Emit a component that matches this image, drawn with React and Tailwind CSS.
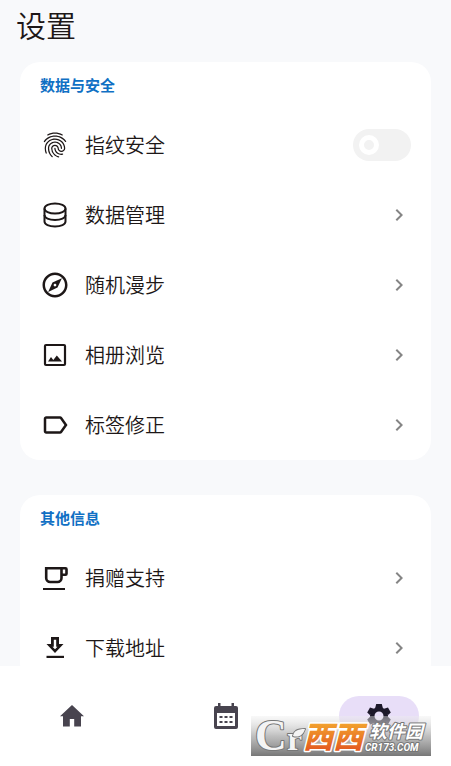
import React from 'react'
import {
  MdFingerprint,
  MdOutlineExplore,
  MdLabelOutline,
  MdChevronRight,
} from 'react-icons/md'

const DatabaseIcon = ({ className }) => (
  <svg viewBox="0 0 30 30" className={className} fill="none" stroke="currentColor" strokeWidth="2">
    <ellipse cx="15" cy="8.500" rx="10.500" ry="5" />
    <path d="M4.500 8.500v13c0 3 4.500 5 10.500 5s10.500-2 10.500-5v-13" />
    <path d="M4.500 15c0 3 4.500 5 10.500 5s10.500-2 10.500-5" />
  </svg>
)

const PhotoIcon = ({ className }) => (
  <svg viewBox="0 0 30 30" className={className}>
    <rect x="5" y="5" width="20" height="20" rx="1" fill="none" stroke="currentColor" strokeWidth="2.200" />
    <path fill="currentColor" d="M8 21.500l3-4.500 2.300 3 3.500-4.500 5.200 6z" />
  </svg>
)

const CupIcon = ({ className }) => (
  <svg viewBox="0 0 30 30" className={className} fill="none" stroke="currentColor" strokeWidth="2.600">
    <path d="M6.200 5.200h15.300V15a4 4 0 0 1-4 4h-7.300a4 4 0 0 1-4-4z" />
    <path d="M21.500 5.200h4a1 1 0 0 1 1 1v4.600a1 1 0 0 1-1 1h-4" />
    <path d="M3 26h22" strokeWidth="2" />
  </svg>
)

const DownloadIcon = ({ className }) => (
  <svg viewBox="0 0 30 30" className={className} fill="currentColor">
    <path fillRule="evenodd" d="M11 4h8v7h4.500L15 20l-8.500-9H11zM13.800 6.800v7h-1.300L15 16.300l2.500-2.500h-1.300v-7z" />
    <path d="M6.500 22.800h17.500v2.200H6.500z" />
  </svg>
)

const HomeIcon = ({ className }) => (
  <svg viewBox="0 0 24 22" className={className} fill="currentColor">
    <path d="M12 0l12 11.300h-3V21.500h-6.800V14H9.800v7.500H3V11.300H0z" />
  </svg>
)

const CalendarIcon = ({ className }) => (
  <svg viewBox="0 0 24 27" className={className}>
    <path fill="currentColor" fillRule="evenodd" d="M4 0h2.500v3h11V0H20v3h2a2 2 0 0 1 2 2v19a2 2 0 0 1-2 2H2a2 2 0 0 1-2-2V5a2 2 0 0 1 2-2h2zM3 10v13h18V10z" />
    <path fill="currentColor" d="M5.500 13h3v2h-3zM10.500 13h3v2h-3zM15.500 13h3v2h-3zM5.500 18h3v2h-3zM10.500 18h3v2h-3zM15.500 18h3v2h-3z" />
  </svg>
)

const GearIcon = ({ className }) => (
  <svg viewBox="-12 -12 24 24" className={className}>
    <circle r="6.800" fill="none" stroke="currentColor" strokeWidth="4.600" />
    <g fill="currentColor">
      <path id="tooth" d="M-2.800-12h5.600l1 4h-7.600z" />
      <use href="#tooth" transform="rotate(60)" />
      <use href="#tooth" transform="rotate(120)" />
      <use href="#tooth" transform="rotate(180)" />
      <use href="#tooth" transform="rotate(240)" />
      <use href="#tooth" transform="rotate(300)" />
    </g>
  </svg>
)

const dataItems = [
  { icon: DatabaseIcon, label: '数据管理' },
  { icon: MdOutlineExplore, label: '随机漫步' },
  { icon: PhotoIcon, label: '相册浏览' },
  { icon: MdLabelOutline, label: '标签修正' },
]

const otherItems = [
  { icon: CupIcon, label: '捐赠支持' },
  { icon: DownloadIcon, label: '下载地址' },
]

const Row = ({ icon: Icon, label }) => (
  <button type="button" className="flex h-[70px] w-full items-center gap-[15px] px-5 text-left">
    <Icon className="size-[30px] shrink-0" />
    <span className="flex-1 text-xl font-[350]">{label}</span>
    <MdChevronRight className="size-6 text-[#858585]" />
  </button>
)

const Section = ({ title, children }) => (
  <section className="rounded-[20px] bg-white">
    <h2 className="flex h-12 items-center px-5 pb-0.5 text-[15px] font-bold text-[#1070c4]">{title}</h2>
    {children}
  </section>
)

const SiteBadge = () => (
  <div className="absolute right-5 bottom-[10px] h-10 w-[180px]">
    <svg viewBox="0 0 180 40" className="h-full w-full overflow-visible" role="img" aria-label="西西软件园 CR173.COM">
      <defs>
        <linearGradient id="shade" x1="0" y1="0" x2="0" y2="1">
          <stop offset="0" stopColor="#eee" stopOpacity="0.400" />
          <stop offset="0.500" stopColor="#b4b4b4" stopOpacity="0.850" />
          <stop offset="1" stopColor="#777" />
        </linearGradient>
        <linearGradient id="tile" x1="0" y1="0" x2="0" y2="1">
          <stop offset="0.200" stopColor="#f3a62f" />
          <stop offset="0.900" stopColor="#e2541f" />
        </linearGradient>
      </defs>
      <rect width="180" height="40" fill="url(#shade)" />
      {/* outlined wordmark with a leaf on the r */}
      <g fill="#f4f4f4" stroke="#777" strokeWidth="2" paintOrder="stroke" strokeLinejoin="round">
        <text x="4" y="34" className="font-['Liberation_Serif',serif] text-[44px] font-bold">C</text>
        <text x="36" y="34" className="font-['Liberation_Serif',serif] text-[34px] font-bold">r</text>
        <path d="M42 20c1-5 4-7 12-7-2 6-6 9-12 7z" />
      </g>
      <text x="52" y="32" fill="url(#tile)" stroke="#fff" strokeWidth="3" paintOrder="stroke" strokeLinejoin="round" className="text-[30px] font-black italic">
        西西
      </text>
      <g fill="#fff" stroke="#777" strokeWidth="2" paintOrder="stroke" strokeLinejoin="round">
        <text x="118" y="22" className="text-[18px] font-bold italic">软件园</text>
        <text x="114" y="35" className="font-[Roboto,sans-serif] text-[10px] font-bold italic">CR173.COM</text>
      </g>
    </svg>
  </div>
)

const App = () => {
  return (
    <div className="flex h-screen flex-col overflow-hidden bg-[#f8f9fb] font-['Noto_Sans_CJK_SC',sans-serif] text-[#1d1717]">
      <header className="flex h-[62px] shrink-0 items-start px-4 pt-1">
        <h1 className="text-[30px] leading-10 font-[350]">设置</h1>
      </header>

      <main className="flex min-h-0 flex-1 flex-col gap-[35px] overflow-hidden px-5">
        <Section title="数据与安全">
          <label className="flex h-[70px] items-center gap-[15px] px-5">
            <MdFingerprint className="size-[30px] shrink-0" />
            <span className="flex-1 text-xl font-[350]">指纹安全</span>
            <input
              type="checkbox"
              role="switch"
              className="h-8 w-[58px] appearance-none rounded-full bg-[#f2f2f2] before:mt-[6px] before:ml-[6px] before:block before:size-5 before:rounded-full before:border-[5px] before:border-white"
            />
          </label>
          {dataItems.map((item) => (
            <Row key={item.label} {...item} />
          ))}
        </Section>

        <Section title="其他信息">
          {otherItems.map((item) => (
            <Row key={item.label} {...item} />
          ))}
        </Section>
      </main>

      <nav className="relative flex h-[100px] shrink-0 items-center justify-between bg-white px-8 text-[#48444f]">
        <button type="button" aria-label="首页" className="flex h-10 w-20 items-center justify-center">
          <HomeIcon className="h-[22px] w-6" />
        </button>
        <button type="button" aria-label="日历" className="flex h-10 w-20 items-center justify-center">
          <CalendarIcon className="h-[27px] w-6" />
        </button>
        <button type="button" aria-label="设置" className="flex h-10 w-20 items-center justify-center rounded-full bg-[#e8def8] text-[#1d192b]">
          <GearIcon className="size-6" />
        </button>
        <SiteBadge />
      </nav>
    </div>
  )
}

export default App
